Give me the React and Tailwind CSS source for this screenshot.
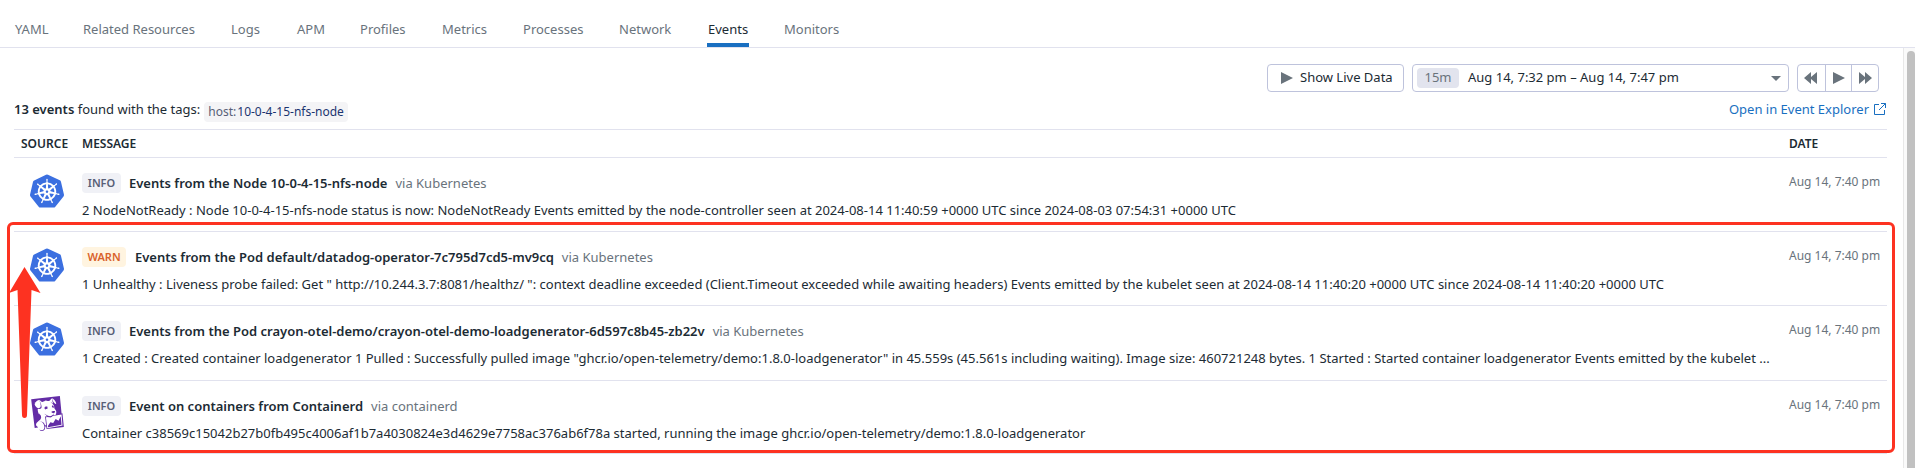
import { SiDatadog, SiKubernetes } from "react-icons/si";

const tabs = [
  { label: "YAML", width: "w-[68px]" },
  { label: "Related Resources", width: "w-[148px]" },
  { label: "Logs", width: "w-[66px]" },
  { label: "APM", width: "w-[63px]" },
  { label: "Profiles", width: "w-[82px]" },
  { label: "Metrics", width: "w-[81px]" },
  { label: "Processes", width: "w-[96px]" },
  { label: "Network", width: "w-[89px]" },
  { label: "Events", width: "w-[76px]", active: true },
  { label: "Monitors", width: "w-[76px]" },
];

const events = [
  {
    level: "INFO",
    icon: "kubernetes",
    height: "h-[74px]",
    title: "Events from the Node 10-0-4-15-nfs-node",
    via: "via Kubernetes",
    body: "2 NodeNotReady : Node 10-0-4-15-nfs-node status is now: NodeNotReady Events emitted by the node-controller seen at 2024-08-14 11:40:59 +0000 UTC since 2024-08-03 07:54:31 +0000 UTC",
  },
  {
    level: "WARN",
    icon: "kubernetes",
    height: "h-[74px]",
    title: "Events from the Pod default/datadog-operator-7c795d7cd5-mv9cq",
    via: "via Kubernetes",
    body: '1 Unhealthy : Liveness probe failed: Get " http://10.244.3.7:8081/healthz/ ": context deadline exceeded (Client.Timeout exceeded while awaiting headers) Events emitted by the kubelet seen at 2024-08-14 11:40:20 +0000 UTC since 2024-08-14 11:40:20 +0000 UTC',
  },
  {
    level: "INFO",
    icon: "kubernetes",
    height: "h-[75px]",
    title: "Events from the Pod crayon-otel-demo/crayon-otel-demo-loadgenerator-6d597c8b45-zb22v",
    via: "via Kubernetes",
    body: '1 Created : Created container loadgenerator 1 Pulled : Successfully pulled image "ghcr.io/open-telemetry/demo:1.8.0-loadgenerator" in 45.559s (45.561s including waiting). Image size: 460721248 bytes. 1 Started : Started container loadgenerator Events emitted by the kubelet ...',
  },
  {
    level: "INFO",
    icon: "datadog",
    height: "h-[73px]",
    title: "Event on containers from Containerd",
    via: "via containerd",
    body: "Container c38569c15042b27b0fb495c4006af1b7a4030824e3d4629e7758ac376ab6f78a started, running the image ghcr.io/open-telemetry/demo:1.8.0-loadgenerator",
  },
];

function Tabs() {
  return (
    <nav className="flex h-12 border-b border-[#e1e2ee] pl-3.5 text-[13px] text-[#69737c]">
      {tabs.map((tab) => (
        <div key={tab.label} className={`flex shrink-0 ${tab.width}`}>
          {tab.active ? (
            <span className="h-[47px] w-[42px] border-b-4 border-[#196fc1] pl-px leading-[58px] text-[#1c2b34]">
              {tab.label}
            </span>
          ) : (
            <span className="pl-px leading-[58px] first-letter:ml-0">{tab.label}</span>
          )}
        </div>
      ))}
    </nav>
  );
}

function Play() {
  return (
    <svg viewBox="0 0 12 12" className="size-3 fill-[#69737c]">
      <path d="M0 0 12 6 0 12Z" />
    </svg>
  );
}

function DoublePlay({ flip }) {
  return (
    <svg viewBox="0 0 13 12" className={`h-3 w-[13px] fill-[#69737c] ${flip ? "-scale-x-100" : ""}`}>
      <path d="M0 0 6 5V0L13 6 6 12V7L0 12Z" />
    </svg>
  );
}

function Toolbar() {
  return (
    <div className="flex h-7 gap-2 self-end text-[13px] text-[#1c2b34]">
      <button className="flex w-[137px] items-center rounded-[4px] border border-[#bec3dc] pl-[13px]">
        <Play />
        <span className="ml-[7px]">Show Live Data</span>
      </button>
      <div className="flex w-[377px] items-center rounded-[4px] border border-[#bec3dc] pr-[7px] pl-1">
        <span className="h-5 w-[42px] rounded-[4px] bg-[#e2e4ee] text-center leading-[18px] text-[#69737c]">15m</span>
        <span className="ml-[9px] grow">Aug 14, 7:32 pm – Aug 14, 7:47 pm</span>
        <svg viewBox="0 0 10 5" className="mt-px h-[5px] w-[10px] fill-[#69737c]">
          <path d="M0 0H10L5 5Z" />
        </svg>
      </div>
      <div className="flex w-[82px] divide-x divide-[#bec3dc] rounded-[4px] border border-[#bec3dc]">
        <button className="flex flex-1 items-center justify-center pr-px"><DoublePlay flip /></button>
        <button className="flex flex-1 items-center justify-center"><Play /></button>
        <button className="flex flex-1 items-center justify-center"><DoublePlay /></button>
      </div>
    </div>
  );
}

function Summary() {
  return (
    <div className="flex h-[37px] justify-between text-[13px] text-[#1c2b34]">
      <div className="flex">
        <p className="leading-[35px]">
          <span className="font-semibold">13 events</span> found with the tags:
        </p>
        <span className="mt-[10px] ml-[4px] h-5 w-36 rounded-[4px] bg-[#f4f4f6] pl-1 text-[12px] leading-[19px] text-[#585f77]">
          host:<span className="ml-[1px] text-[#1b3470]">10-0-4-15-nfs-node</span>
        </span>
      </div>
      <a className="flex items-start text-[#196fc1]">
        <span className="leading-[35px]">Open in Event Explorer</span>
        <svg viewBox="0 0 12 12" className="mt-[11px] mr-px ml-[5px] size-3 fill-none stroke-[#196fc1]">
          <path d="M5 1.5H.5v10h10V7M7 .5h4.5V5M11.5.5 5 7" />
        </svg>
      </a>
    </div>
  );
}

function EventRow({ event }) {
  const warn = event.level === "WARN";
  return (
    <div className={`flex border-t border-[#e1e2ee] ${event.height}`}>
      <div className="w-[68px] shrink-0 pt-4 pl-4">
        {event.icon === "kubernetes" ? (
          <SiKubernetes className="size-[34px] text-[#3b6fe0]" />
        ) : (
          <SiDatadog className="mt-[-1px] size-[35px] text-[#632ca6]" />
        )}
      </div>
      <div className="w-[1707px] shrink-0 pt-[15px] whitespace-nowrap">
        <div className="flex h-5 text-[13px]">
          <span
            className={`rounded-[4px] text-center text-[11px] leading-5 font-semibold ${
              warn ? "w-11 bg-[#fff4e0] text-[#d9622b]" : "w-[39px] bg-[#f0f1f6] text-[#585f77]"
            }`}
          >
            {event.level}
          </span>
          <span className={`leading-[21px] font-semibold text-[#1c2b34] ${warn ? "ml-[9px]" : "ml-2"}`}>{event.title}</span>
          <span className="ml-2 leading-[21px] text-[#69737c]">{event.via}</span>
        </div>
        <p className="mt-[7px] text-[13px] leading-5 text-[#1c2b34]">{event.body}</p>
      </div>
      <time className="pt-[14px] text-[12px] leading-5 whitespace-nowrap text-[#69737c]">Aug 14, 7:40 pm</time>
    </div>
  );
}

function Annotation() {
  return (
    <>
      <div className="absolute top-[222px] left-[7px] h-[231px] w-[1888px] rounded-[6px] border-3 border-[#fd3221]" />
      <svg viewBox="0 0 34 154" className="absolute top-[266px] left-2 h-[154px] w-[34px] fill-[#fd3221]">
        <path d="M16.5 1 32.5 27 23.5 24 19 149Q19 152 16.5 152T14 149L9.5 24 1 27Z" />
      </svg>
    </>
  );
}

export default function App() {
  return (
    <div className="relative h-[468px] overflow-hidden bg-white font-['Noto_Sans',sans-serif]">
      <Tabs />
      <div className="flex h-[420px]">
        <main className="flex w-[1903px] shrink-0 flex-col pt-4 pr-4 pl-3.5">
          <div className="flex flex-col pr-2">
            <Toolbar />
          </div>
          <Summary />
          <div className="flex h-7 border-t border-[#e1e2ee] text-[12px] leading-[27px] font-semibold text-[#1c2b34]">
            <span className="w-[68px] pl-[7px]">SOURCE</span>
            <span className="w-[1707px]">MESSAGE</span>
            <span>DATE</span>
          </div>
          <div className="border-b border-[#e1e2ee]">
            {events.map((event) => (
              <EventRow key={event.title} event={event} />
            ))}
          </div>
        </main>
        <div className="w-3 border-l border-[#e8e8e8] bg-[#fafafa] pt-[3px] pl-[3px]">
          <div className="h-[440px] rounded-t-full bg-[#c1c1c1]" />
        </div>
      </div>
      <Annotation />
    </div>
  );
}
